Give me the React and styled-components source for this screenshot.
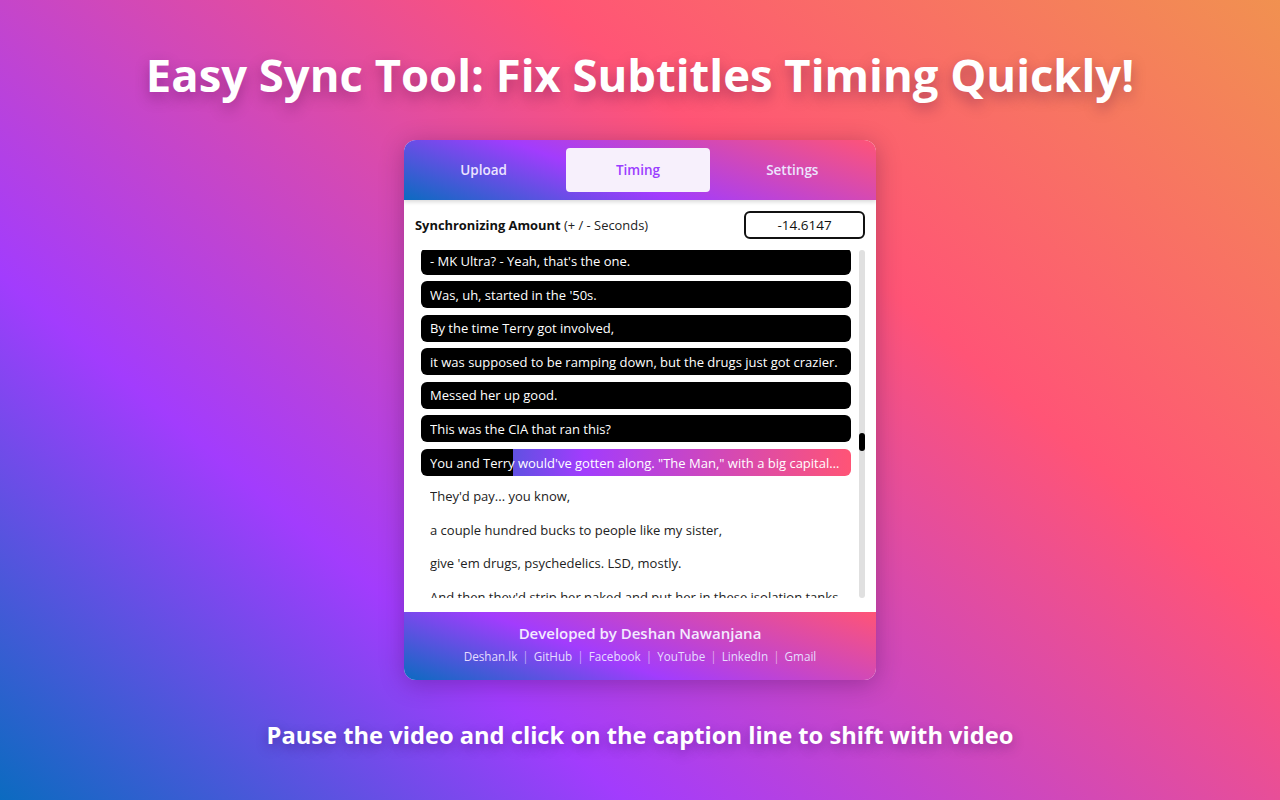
import React from "react";
import styled, { createGlobalStyle } from "styled-components";

const GlobalStyle = createGlobalStyle`
  html, body {
    margin: 0;
    padding: 0;
  }
  body {
    font-family: "Open Sans", "DejaVu Sans", sans-serif;
    background: linear-gradient(40deg, #0b6bc0 0%, #a23cfd 28%, #ff5476 67%, #f19150 100%);
    min-height: 100vh;
  }
`;

const Page = styled.main`
  min-height: 800px;
  display: flex;
  flex-direction: column;
  align-items: center;
`;

const Title = styled.h1`
  margin: 46px 0 0;
  font-size: 45.4px;
  line-height: 56px;
  font-weight: 700;
  color: #fff;
  text-shadow: 0 6px 14px rgba(60, 0, 60, 0.35);
`;

const Card = styled.section`
  margin-top: 38px;
  width: 472px;
  height: 540px;
  border-radius: 12px;
  overflow: hidden;
  background: #fff;
  box-shadow: 0 4px 24px rgba(40, 0, 60, 0.3);
  display: flex;
  flex-direction: column;
`;

const Tabs = styled.nav`
  height: 60px;
  box-sizing: border-box;
  padding: 8px 12px 8px 8px;
  display: grid;
  grid-template-columns: repeat(3, 1fr);
  gap: 11px;
  background: linear-gradient(20deg, #0b6bc0 0%, #a23cfd 42%, #ff5476 100%);
  box-shadow: 0 2px 4px rgba(0, 0, 0, 0.15);
  position: relative;
  z-index: 1;
`;

const Tab = styled.button`
  border: 0;
  border-radius: 4px;
  font-family: inherit;
  font-size: 13.5px;
  font-weight: 600;
  cursor: pointer;
  background: ${(p) => (p.$active ? "#f7f0fc" : "transparent")};
  color: ${(p) => (p.$active ? "#9b3dff" : "#ece4ff")};
`;

const Body = styled.div`
  flex: 1;
  padding: 11px 11px 0 11px;
  display: flex;
  flex-direction: column;
`;

const AmountRow = styled.div`
  display: flex;
  align-items: center;
  justify-content: space-between;
  height: 28px;
  font-size: 12.9px;
  color: #222;
  b {
    font-weight: 700;
    color: #111;
  }
`;

const AmountInput = styled.input`
  width: 121px;
  height: 28px;
  box-sizing: border-box;
  border: 2px solid #111;
  border-radius: 6px;
  text-align: center;
  font-family: inherit;
  font-size: 13.5px;
  color: #111;
  outline: none;
`;

const ListWrap = styled.div`
  margin-top: 11px;
  margin-left: 6px;
  height: 348px;
  display: flex;
  gap: 8px;
`;

const Lines = styled.div`
  flex: 1;
  overflow: hidden;
  display: flex;
  flex-direction: column;
  gap: 6.6px;
  & > :first-child {
    margin-top: -2.5px;
  }
`;

const Line = styled.div`
  flex: none;
  height: 27px;
  padding: 0 9px;
  border-radius: 6px;
  display: flex;
  align-items: center;
  font-size: 13px;
  white-space: nowrap;
  overflow: hidden;
  cursor: pointer;
  color: ${(p) => (p.$state === "future" ? "#222" : "#fff")};
  background: ${(p) =>
    p.$state === "past"
      ? "#000"
      : p.$state === "current"
      ? `linear-gradient(90deg, #000 0 ${p.$progress}px, transparent ${p.$progress}px), linear-gradient(90deg, #0b6bc0 0%, #a23cfd 38%, #ff5476 100%)`
      : "transparent"};
`;

const LineText = styled.span`
  overflow: hidden;
  text-overflow: ellipsis;
`;

const Track = styled.div`
  width: 6px;
  border-radius: 3px;
  background: #e0e0e0;
`;

const Thumb = styled.div`
  margin-top: 183px;
  height: 18px;
  width: 6px;
  border-radius: 3px;
  background: #000;
`;

const Footer = styled.footer`
  height: 68px;
  box-sizing: border-box;
  padding-top: 10px;
  margin-top: 14px;
  background: linear-gradient(20deg, #0b6bc0 0%, #a23cfd 40%, #ff5476 100%);
  display: flex;
  flex-direction: column;
  align-items: center;
`;

const Credit = styled.div`
  font-size: 15px;
  font-weight: 600;
  color: #f3eaff;
  line-height: 22px;
`;

const Links = styled.div`
  margin-top: 4px;
  display: flex;
  align-items: center;
  gap: 5px;
  font-size: 11.7px;
  color: #e6dcff;
`;

const LinkItem = styled.a`
  color: inherit;
  text-decoration: none;
`;

const Sep = styled.span`
  color: rgba(255, 255, 255, 0.55);
`;

const Hint = styled.p`
  margin: 39px 0 0;
  font-size: 23.7px;
  font-weight: 700;
  color: #fff;
  text-shadow: 0 4px 12px rgba(40, 0, 80, 0.35);
`;

const lines = [
  "- MK Ultra? - Yeah, that's the one.",
  "Was, uh, started in the '50s.",
  "By the time Terry got involved,",
  "it was supposed to be ramping down, but the drugs just got crazier.",
  "Messed her up good.",
  "This was the CIA that ran this?",
  "You and Terry would've gotten along. \"The Man,\" with a big capital T-H-E.",
  "They'd pay... you know,",
  "a couple hundred bucks to people like my sister,",
  "give 'em drugs, psychedelics. LSD, mostly.",
  "And then they'd strip her naked and put her in these isolation tanks.",
];

const current = 6;

const links = ["Deshan.lk", "GitHub", "Facebook", "YouTube", "LinkedIn", "Gmail"];

const App = () => {
  return (
    <>
      <GlobalStyle />
      <Page>
        <Title>Easy Sync Tool: Fix Subtitles Timing Quickly!</Title>
        <Card>
          <Tabs>
            <Tab>Upload</Tab>
            <Tab $active>Timing</Tab>
            <Tab>Settings</Tab>
          </Tabs>
          <Body>
            <AmountRow>
              <span>
                <b>Synchronizing Amount</b> (+ / - Seconds)
              </span>
              <AmountInput defaultValue="-14.6147" />
            </AmountRow>
            <ListWrap>
              <Lines>
                {lines.map((text, i) => (
                  <Line
                    key={i}
                    $state={i < current ? "past" : i === current ? "current" : "future"}
                    $progress={92}
                  >
                    <LineText>{text}</LineText>
                  </Line>
                ))}
              </Lines>
              <Track>
                <Thumb />
              </Track>
            </ListWrap>
          </Body>
          <Footer>
            <Credit>Developed by Deshan Nawanjana</Credit>
            <Links>
              {links.map((l, i) => (
                <React.Fragment key={l}>
                  {i > 0 && <Sep>|</Sep>}
                  <LinkItem href="#">{l}</LinkItem>
                </React.Fragment>
              ))}
            </Links>
          </Footer>
        </Card>
        <Hint>Pause the video and click on the caption line to shift with video</Hint>
      </Page>
    </>
  );
};

export default App;
